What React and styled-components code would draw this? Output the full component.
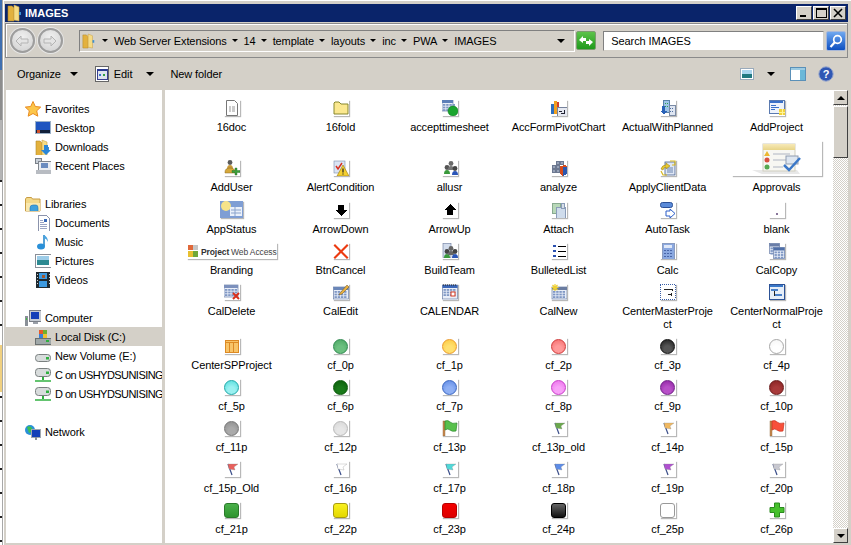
import { Fragment } from "react";
import styled, { createGlobalStyle } from "styled-components";

const GlobalStyle = createGlobalStyle`
  html, body {
    margin: 0;
    padding: 0;
    background: #d4d0c8;
  }
  * { box-sizing: border-box; }
`;

const Page = styled.div`
  display: flex;
  width: 851px;
  height: 545px;
  overflow: hidden;
  font-family: "Liberation Sans", Arial, sans-serif;
  font-size: 11px;
  letter-spacing: -0.1px;
  color: #000;
`;

const DesktopEdge = styled.div`
  width: 2px;
  flex: none;
  background:
    linear-gradient(#3f6fb0 0 70px, #8d8d8d 70px 120px, #b5b5b5 120px 180px, transparent 180px),
    linear-gradient(transparent 345px, #f0d080 345px 392px, transparent 392px),
    repeating-linear-gradient(#fff 0 12px, #222 12px 14px, #fff 14px 24px);
`;

const Window = styled.div`
  flex: 1;
  display: flex;
  flex-direction: column;
  min-width: 0;
  padding: 4px 3px 2px 2px;
  background: #d4d0c8;
  border-left: 1px solid #a8a8a8;
  box-shadow: inset 1px 1px 0 #fff;
`;

const TitleBar = styled.div`
  height: 18px;
  flex: none;
  display: flex;
  align-items: center;
  background: #0a246a;
  padding-left: 2px;
  padding-right: 2px;
`;

const TitleText = styled.span`
  margin-left: 2px;
  color: #fff;
  font-weight: 700;
  font-size: 11px;
  letter-spacing: 0;
  flex: 1;
`;

const WinButton = styled.div`
  width: 16px;
  height: 14px;
  margin-left: 1px;
  display: flex;
  align-items: center;
  justify-content: center;
  background: #d4d0c8;
  border: 1px solid;
  border-color: #fff #404040 #404040 #fff;
`;

const AddressBar = styled.div`
  margin-top: 1px;
  height: 35px;
  flex: none;
  display: flex;
  align-items: center;
  padding: 0 1px 0 4px;
  border: 1px solid #8a8a8a;
  box-shadow: inset 1px 1px 0 #fff;
`;

const RoundButton = styled.div`
  width: 25px;
  height: 25px;
  margin-right: 3px;
  border-radius: 50%;
  border: 2px solid #9d9d9d;
  background: radial-gradient(circle at 50% 35%, #f0f0f0, #cfcfcf);
  box-shadow: 0 0 0 1px #e6e6e6;
  display: flex;
  align-items: center;
  justify-content: center;
`;

const Breadcrumb = styled.div`
  width: 497px;
  height: 22px;
  margin-left: 13px;
  display: flex;
  align-items: center;
  padding-left: 2px;
  border: 1px solid;
  border-color: #808080 #fff #fff #808080;
  white-space: nowrap;
`;

const Crumb = styled.span`
  margin-right: 5px;
`;

const Caret = styled.span`
  flex: none;
  width: 0;
  height: 0;
  border-left: ${(p) => p.$size || 3}px solid transparent;
  border-right: ${(p) => p.$size || 3}px solid transparent;
  border-top: ${(p) => p.$size || 3}px solid #000;
  margin-right: ${(p) => p.$right ?? 6}px;
  margin-left: ${(p) => p.$left ?? 0}px;
`;

const Spring = styled.span`
  flex: 1;
`;

const GoButton = styled.div`
  width: 20px;
  height: 19px;
  margin-left: 1px;
  display: flex;
  align-items: center;
  justify-content: center;
  border: 1px solid #7c9c70;
  border-radius: 2px;
  background: linear-gradient(#5dc34a, #1f9a1c);
`;

const SearchBox = styled.div`
  width: 221px;
  height: 20px;
  margin-left: 7px;
  padding-left: 7px;
  display: flex;
  align-items: center;
  background: #fff;
  border: 1px solid;
  border-color: #808080 #d4d0c8 #d4d0c8 #808080;
`;

const SearchButton = styled.div`
  width: 20px;
  height: 20px;
  margin-left: 2px;
  display: flex;
  align-items: center;
  justify-content: center;
  border: 1px solid #a8b8d8;
  border-radius: 2px;
  background: linear-gradient(#6fa8f0, #0d4fc0);
`;

const Toolbar = styled.div`
  height: 32px;
  flex: none;
  display: flex;
  align-items: center;
  padding: 0 14px 0 12px;
`;

const ToolText = styled.span`
  margin-right: ${(p) => p.$right ?? 6}px;
`;

const ToolIcon = styled.span`
  display: flex;
  margin-left: ${(p) => p.$left ?? 0}px;
  margin-right: ${(p) => p.$right ?? 0}px;
`;

const Panes = styled.div`
  flex: 1;
  display: flex;
  min-height: 0;
`;

const NavPane = styled.div`
  width: 156px;
  flex: none;
  margin-left: 1px;
  padding-top: 9px;
  background: #fff;
  overflow: hidden;
`;

const NavGroup = styled.div`
  margin-bottom: 19px;
`;

const NavRow = styled.div`
  height: 19px;
  display: flex;
  align-items: center;
  gap: 4px;
  white-space: nowrap;
  padding-left: ${(p) => (p.$child ? 29 : 19)}px;
  background: ${(p) => (p.$selected ? "#d4d0c8" : "transparent")};
  letter-spacing: ${(p) => (p.$squeeze ? "-0.55px" : "inherit")};
  svg { flex: none; }
`;

const Splitter = styled.div`
  width: 3px;
  flex: none;
`;

const Content = styled.div`
  flex: 1;
  min-width: 0;
  padding: 10px 2px 0 12px;
  background: #fff;
  overflow: hidden;
`;

const IconGrid = styled.div`
  display: grid;
  grid-template-columns: repeat(6, 109px);
  grid-auto-rows: auto;
`;

const Cell = styled.div`
  grid-row: span 2;
  display: grid;
  grid-template-rows: subgrid;
  justify-items: center;
`;

const Thumb = styled.div`
  align-self: end;
  width: ${(p) => p.$w || 16}px;
  height: ${(p) => p.$h || 16}px;
  margin-bottom: 1px;
  display: flex;
  align-items: center;
  justify-content: center;
  background: #fff;
  box-shadow: 1px 1px 1px rgba(0, 0, 0, 0.28);
`;

const Label = styled.div`
  padding: 4px 0 7px;
  line-height: 13px;
  text-align: center;
  white-space: pre;
`;

const Dot = styled.span`
  width: 15px;
  height: 15px;
  border-radius: 50%;
  border: 1px solid ${(p) => p.$edge};
  background: radial-gradient(circle at 50% 70%, ${(p) => p.$fill} 30%, ${(p) => p.$dark} 100%);
`;

const Block = styled.span`
  width: 15px;
  height: 15px;
  border-radius: 3px;
  border: 1px solid ${(p) => p.$edge};
  background: linear-gradient(${(p) => p.$fill}, ${(p) => p.$dark});
`;

const Scrollbar = styled.div`
  width: 15px;
  flex: none;
  display: flex;
  flex-direction: column;
  background: repeating-conic-gradient(#d4d0c8 0 25%, #fff 0 50%) 0 0 / 2px 2px;
`;

const ScrollButton = styled.div`
  height: 15px;
  flex: none;
  display: flex;
  align-items: center;
  justify-content: center;
  background: #d4d0c8;
  border: 1px solid;
  border-color: #fff #404040 #404040 #fff;
`;

const ScrollThumb = styled.div`
  height: 52px;
  margin-top: 1px;
  flex: none;
  background: #d4d0c8;
  border: 1px solid;
  border-color: #fff #404040 #404040 #fff;
`;

const ScrollTrack = styled.div`
  flex: 1;
`;

const UpCaret = styled.span`
  width: 0;
  height: 0;
  border-left: 4px solid transparent;
  border-right: 4px solid transparent;
  border-bottom: 4px solid #000;
`;

const DownCaret = styled.span`
  width: 0;
  height: 0;
  border-left: 4px solid transparent;
  border-right: 4px solid transparent;
  border-top: 4px solid #000;
`;

const Ico = ({ w = 16, h = 16, children }) => (
  <svg width={w} height={h} viewBox={`0 0 ${w} ${h}`} shapeRendering="crispEdges">
    {children}
  </svg>
);

const Smooth = ({ w = 16, h = 16, children }) => (
  <svg width={w} height={h} viewBox={`0 0 ${w} ${h}`}>
    {children}
  </svg>
);

const Folder = ({ w = 16, h = 18 }) => (
  <svg width={w} height={h} viewBox="0 0 16 18">
    <path d="M1 2h4l2 2v13H1z" fill="#e3b13d" stroke="#b48a2a" strokeWidth=".6" />
    <path d="M7 1l5 2v14l-5-1z" fill="#f6dc84" stroke="#c9a24a" strokeWidth=".6" />
    <rect x="12" y="8" width="2" height="3" fill="#3c8fd0" />
  </svg>
);

const CalendarGrid = ({ x = 1, y = 2, w = 14, h = 12, head = "#5d7fb8" }) => {
  const cells = [];
  for (let r = 0; r < 3; r++) {
    for (let c = 0; c < 4; c++) {
      cells.push(<rect key={`${r}-${c}`} x={x + 1 + c * 3.2} y={y + 4 + r * 2.6} width="2.4" height="1.8" fill="#7f97c4" />);
    }
  }
  return (
    <>
      <rect x={x} y={y} width={w} height={h} fill="#e9eef8" stroke="#6a7fa8" strokeWidth=".7" />
      <rect x={x} y={y} width={w} height="3" fill={head} />
      {cells}
    </>
  );
};

const MiniUser = ({ x, y, c = "#6d6d6d", b = "#c89a3a" }) => (
  <>
    <circle cx={x + 3} cy={y + 2.5} r="2.4" fill={c} />
    <path d={`M${x} ${y + 9}q0-4 3-4t3 4z`} fill={b} />
  </>
);

const FlagSmall = ({ c }) => (
  <Smooth>
    <path d="M8 14L4 3" stroke="#3c4f8a" strokeWidth="1.2" />
    <path d="M4 3l10 0-4 3 1 3-6-1z" fill={c} stroke="#888" strokeWidth=".3" />
  </Smooth>
);

const FlagBig = ({ c, d }) => (
  <Smooth>
    <rect x="1" y="1" width="2" height="15" fill="#c98a50" stroke="#8a6030" strokeWidth=".4" />
    <path d="M3 1q3-1.200 5 1t7 1l-1 8q-4 1-6-1t-5 0z" fill={c} stroke={d} strokeWidth=".7" />
  </Smooth>
);

const icons = {
  doc: (
    <Smooth>
      <path d="M2.500.5h8l3 3v12h-11z" fill="#fff" stroke="#777" />
      <path d="M5 7h2M8 7h3M5 9h2M8 9h3M5 11h2M8 11h3" stroke="#999" />
    </Smooth>
  ),
  fold: (
    <Smooth>
      <path d="M1 14V3l1-1h4l2 2h7v10z" fill="#fbe88f" stroke="#87862c" />
    </Smooth>
  ),
  accept: (
    <Smooth>
      <CalendarGrid x={0} y={0} w={11} h={11} />
      <circle cx="11" cy="11" r="5" fill="#1aa52e" stroke="#0c7a1c" strokeWidth=".6" />
    </Smooth>
  ),
  pivot: (
    <Ico>
      <rect x="0" y="4" width="3" height="10" fill="#2d6fc0" />
      <rect x="3" y="1" width="3" height="13" fill="#f0a020" />
      <rect x="6" y="2" width="2" height="5" fill="#d04030" />
      <rect x="6" y="7" width="10" height="9" fill="#e6e9f2" stroke="#77839c" />
      <path d="M10 13h3v-3M8 11h3" stroke="#223" fill="none" />
    </Ico>
  ),
  actual: (
    <Ico>
      <rect x="3" y="0" width="6" height="12" fill="#9ec4e8" stroke="#5a83ab" />
      <path d="M5 3h1M7 3h1M5 6h1M7 6h1" stroke="#30a050" />
      <rect x="9" y="5" width="6" height="10" fill="#dfe6f2" stroke="#7a8aa5" />
      <path d="M10 8h1M12 8h1M10 11h1M12 11h1" stroke="#5070a0" />
      <path d="M2 6h3v5h2l-3 4-3-4h1z" fill="#2a62b8" />
    </Ico>
  ),
  addproject: (
    <Ico>
      <rect x="0" y="0" width="15" height="13" fill="#eef3fb" stroke="#5a7ab0" />
      <rect x="1" y="1" width="13" height="2" fill="#3a70c8" />
      <path d="M2 5h5M2 7h8M2 9h4" stroke="#3a70c8" />
      <rect x="10" y="9" width="6" height="6" fill="#f2d23c" />
      <path d="M13 9v6M10 12h6" stroke="#fff59a" />
    </Ico>
  ),
  adduser: (
    <Smooth>
      <MiniUser x={3} y={0} c="#5c5c5c" />
      <path d="M1 12q0-4 5-4t5 4v1H1z" fill="#d6a83a" stroke="#8a6820" strokeWidth=".5" />
      <path d="M11 8h2v2.500h3v2h-3V15h-2v-2.500H8v-2h3z" fill="#3ea03c" stroke="#1f6a1f" strokeWidth=".4" />
    </Smooth>
  ),
  alert: (
    <Smooth>
      <rect x="1" y="1" width="11" height="12" fill="#dbe4f4" stroke="#7b8cac" strokeWidth=".6" />
      <path d="M3 6l2 3 4-6" stroke="#d83020" strokeWidth="1.500" fill="none" />
      <path d="M10 5l6 11H4z" fill="#f4cf30" stroke="#9a7a10" strokeWidth=".6" />
      <path d="M10 8.500v4M10 13.500v1" stroke="#222" strokeWidth="1.200" />
    </Smooth>
  ),
  allusr: (
    <Smooth>
      <MiniUser x={2} y={5} c="#555" b="#3a9a3c" />
      <MiniUser x={6} y={1} c="#6a6a6a" b="#777" />
      <MiniUser x={10} y={6} c="#444" b="#2a55b8" />
    </Smooth>
  ),
  analyze: (
    <Ico>
      <path d="M1 5h3v3H1zM5 1h3v3H5zM5 5h3v3H5zM1 9h3v3H1zM5 9h3v3H5zM9 1h3v3H9z" fill="#98a3b8" stroke="#6c7890" />
      <path d="M9 6l5-1 2 2v7l-4 2-3-2z" fill="#d64c1c" />
      <path d="M12 7l4 0v7l-4 2z" fill="#2a58b0" />
    </Ico>
  ),
  apply: (
    <Smooth>
      <rect x="5" y="2" width="10" height="13" fill="#dfe7f5" stroke="#46608e" strokeWidth=".8" />
      <path d="M7 8h6M7 10h6M7 12h6" stroke="#6a84b0" />
      <path d="M1 9q1-4 5-4V3l4 3-4 3V7q-2 0-3 3z" fill="#e8c830" stroke="#90790e" strokeWidth=".5" />
      <path d="M10 1h5v4h-3" fill="none" stroke="#d8b820" strokeWidth="1.200" />
      <path d="M1 11l2 4h4" fill="none" stroke="#d8b820" strokeWidth="1.200" />
    </Smooth>
  ),
  approvals: (
    <svg width="90" height="35" viewBox="0 0 90 35">
      <defs>
        <linearGradient id="apprTop" x1="0" y1="0" x2="0" y2="1">
          <stop offset="0" stopColor="#f7e9b8" />
          <stop offset="1" stopColor="#e8d488" />
        </linearGradient>
      </defs>
      <path d="M20 29h45l3 4H30z" fill="#e8e8e8" />
      <rect x="31" y="3" width="32" height="27" fill="#f7f7f2" stroke="#cfcdbf" />
      <rect x="31" y="3" width="32" height="6" fill="url(#apprTop)" />
      <path d="M35 10l3 5h-6z" fill="#ecb830" />
      <circle cx="35" cy="19" r="2.500" fill="#d85040" />
      <circle cx="35" cy="26" r="2.500" fill="#56a850" />
      <path d="M41 13h17M41 19h13M41 26h10" stroke="#c8ccd2" strokeWidth="1.500" />
      <rect x="54" y="15" width="12" height="8" fill="#dde6f0" stroke="#8f9caf" />
      <path d="M52 24l5 5 11-12" stroke="#3b78c8" strokeWidth="2.500" fill="none" />
    </svg>
  ),
  status: (
    <svg width="23" height="17" viewBox="0 0 23 17">
      <rect width="23" height="17" fill="#7f9ed4" />
      <circle cx="6" cy="5" r="5" fill="#f6e38a" />
      <rect x="10" y="6" width="12" height="9" fill="#eaf0fa" />
      <path d="M11 9h10M11 12h10M15 6v9" stroke="#8aa3cc" />
    </svg>
  ),
  down: (
    <Ico>
      <path d="M5 3h6v5h3l-6 6-6-6h3z" fill="#000" />
    </Ico>
  ),
  up: (
    <Ico>
      <path d="M8 2l6 6h-3v5H5V8H2z" fill="#000" />
    </Ico>
  ),
  attach: (
    <Ico>
      <rect x="1" y="1" width="8" height="10" fill="#b8d8b8" stroke="#88aa90" />
      <rect x="5" y="5" width="9" height="11" fill="#cfdcec" stroke="#8a9cb8" />
      <rect x="10" y="1" width="3" height="5" fill="#d6dee8" stroke="#8a9cb8" />
    </Ico>
  ),
  autotask: (
    <Smooth>
      <rect x="0.500" y="0.500" width="12" height="5" rx="2" fill="#5a8ad8" stroke="#2a4f96" />
      <path d="M6 9h4V7l5 4.500L10 16v-2H6z" fill="#fff" stroke="#2a5cc8" />
    </Smooth>
  ),
  blank: (
    <Ico>
      <rect x="7" y="11" width="2" height="2" fill="#88759a" />
    </Ico>
  ),
  branding: (
    <svg width="90" height="16" viewBox="0 0 90 16">
      <rect x="1" y="2" width="5" height="5" fill="#e0683a" />
      <rect x="6" y="2" width="5" height="5" fill="#c6c6c6" />
      <rect x="1" y="8" width="5" height="6" fill="#e8c030" />
      <rect x="6" y="8" width="5" height="6" fill="#70a838" />
      <text x="14" y="12" fontFamily="Liberation Sans, sans-serif" fontSize="8.500" fontWeight="700" fill="#333">Project</text>
      <text x="44" y="12" fontFamily="Liberation Sans, sans-serif" fontSize="8.500" fill="#444">Web Access</text>
    </svg>
  ),
  cancel: (
    <Smooth>
      <path d="M2 1l6 6 6-6 1.500 1.500L9.500 8.500l6 6-1.500 1.500-6-6-6 6-1.500-1.500 6-6-6-6z" fill="#ec3a10" />
    </Smooth>
  ),
  team: (
    <Smooth>
      <rect x="1" y="0.500" width="8" height="14" fill="#d2dcec" stroke="#7a88a8" strokeWidth=".7" />
      <MiniUser x={2} y={6} c="#444" b="#3a9a3c" />
      <MiniUser x={6} y={3} c="#666" b="#666" />
      <MiniUser x={10} y={6} c="#444" b="#2a55b8" />
    </Smooth>
  ),
  bullets: (
    <Ico>
      <path d="M2 2h3v2H2zM2 7h3v2H2zM2 12h3v2H2z" fill="#2a50b0" />
      <path d="M7 3h8M7 8h8M7 13h8" stroke="#000" />
    </Ico>
  ),
  calc: (
    <Ico>
      <rect x="2" y="0" width="12" height="16" fill="#8aa8e0" stroke="#8a9cc0" />
      <rect x="4" y="2" width="8" height="3" fill="#dfe8f8" />
      <path d="M4 7h2M7 7h2M10 7h2M4 10h2M7 10h2M10 10h2M4 13h2M7 13h2M10 13h2" stroke="#4a66a8" />
    </Ico>
  ),
  calcopy: (
    <Smooth>
      <CalendarGrid x={0.500} y={0.500} w={10} h={10} head="#6a7ea8" />
      <CalendarGrid x={4.500} y={4.500} w={11} h={11} head="#4f6fa8" />
    </Smooth>
  ),
  caldelete: (
    <Smooth>
      <CalendarGrid x={0} y={1} w={14} h={12} head="#7c90bc" />
      <path d="M9 9l6 6M15 9l-6 6" stroke="#d8301c" strokeWidth="2" />
    </Smooth>
  ),
  caledit: (
    <Smooth>
      <CalendarGrid x={0.500} y={3} w={15} h={12} head="#6a86b8" />
      <path d="M7 9l7-8 2 2-7 7-3 1z" fill="#e8b040" stroke="#6a5020" strokeWidth=".5" />
    </Smooth>
  ),
  calendar: (
    <Smooth>
      <CalendarGrid x={0.500} y={1} w={15} h={14} head="#3a66b8" />
      <path d="M1 1h14" stroke="#222" strokeDasharray="1 1" />
      <rect x="9" y="8" width="4" height="4" fill="#fff" stroke="#d83a20" />
    </Smooth>
  ),
  calnew: (
    <Smooth>
      <CalendarGrid x={1} y={3} w={15} h={12} head="#6a7ca0" />
      <path d="M4 0v7M0.500 3.500h7M1.500 1l5 5M6.500 1l-5 5" stroke="#f0d030" strokeWidth="1.200" />
    </Smooth>
  ),
  master: (
    <Ico>
      <rect x="0" y="0" width="15" height="15" fill="#fff" stroke="#3a5fa8" strokeDasharray="1 1" />
      <path d="M4 5h8v2M8 10h3" stroke="#222" fill="none" />
      <path d="M11 9v3" stroke="#222" />
    </Ico>
  ),
  normal: (
    <Ico>
      <rect x="0" y="0" width="15" height="15" fill="#e6eef8" stroke="#2c5296" />
      <rect x="1" y="1" width="13" height="2" fill="#3a78c8" />
      <rect x="2" y="5" width="7" height="2" fill="#4a80c8" />
      <rect x="6" y="10" width="7" height="2" fill="#4a80c8" />
      <path d="M5 7v4h1" stroke="#222" fill="none" />
    </Ico>
  ),
  centersp: (
    <Ico>
      <rect x="1" y="2" width="13" height="12" fill="#f8c468" stroke="#dd8a24" />
      <path d="M1 4h13M5 4v10M9 4v10" stroke="#dd8a24" fill="none" />
    </Ico>
  ),
  plus: (
    <Smooth>
      <path d="M5.500 1h5v4.500H15v5h-4.500V15h-5v-4.500H1v-5h4.500z" fill="#46c02c" stroke="#2a8a1e" />
    </Smooth>
  ),
};

const dot = (fill, dark, edge) => <Dot $fill={fill} $dark={dark} $edge={edge} />;
const block = (fill, dark, edge) => <Block $fill={fill} $dark={dark} $edge={edge} />;

const items = [
  ["16doc", icons.doc],
  ["16fold", icons.fold],
  ["accepttimesheet", icons.accept],
  ["AccFormPivotChart", icons.pivot],
  ["ActualWithPlanned", icons.actual],
  ["AddProject", icons.addproject],
  ["AddUser", icons.adduser],
  ["AlertCondition", icons.alert],
  ["allusr", icons.allusr],
  ["analyze", icons.analyze],
  ["ApplyClientData", icons.apply],
  ["Approvals", icons.approvals, 90, 35],
  ["AppStatus", icons.status, 23, 17],
  ["ArrowDown", icons.down],
  ["ArrowUp", icons.up],
  ["Attach", icons.attach],
  ["AutoTask", icons.autotask],
  ["blank", icons.blank],
  ["Branding", icons.branding, 90, 16],
  ["BtnCancel", icons.cancel],
  ["BuildTeam", icons.team],
  ["BulletedList", icons.bullets],
  ["Calc", icons.calc],
  ["CalCopy", icons.calcopy],
  ["CalDelete", icons.caldelete],
  ["CalEdit", icons.caledit],
  ["CALENDAR", icons.calendar],
  ["CalNew", icons.calnew],
  ["CenterMasterProje\nct", icons.master],
  ["CenterNormalProje\nct", icons.normal],
  ["CenterSPProject", icons.centersp],
  ["cf_0p", dot("#6cc080", "#4aa562", "#2f8a50")],
  ["cf_1p", dot("#ffe070", "#fbc83e", "#eb9a2a")],
  ["cf_2p", dot("#ff9a9a", "#f46a6a", "#d03a3a")],
  ["cf_3p", dot("#555", "#1a1a1a", "#111")],
  ["cf_4p", dot("#fff", "#f4f4f4", "#a8a8a8")],
  ["cf_5p", dot("#9af0f0", "#50dcdc", "#20a8a8")],
  ["cf_6p", dot("#1a7a1a", "#0a5a0a", "#0a5a0a")],
  ["cf_7p", dot("#8fb0f4", "#5c88e4", "#3a66c0")],
  ["cf_8p", dot("#f8a0f8", "#ea6cea", "#c83cc8")],
  ["cf_9p", dot("#b850c8", "#8c20a0", "#702088")],
  ["cf_10p", dot("#a83a3a", "#842020", "#6a1a1a")],
  ["cf_11p", dot("#aaa", "#8c8c8c", "#777")],
  ["cf_12p", dot("#e6e6e6", "#d6d6d6", "#b8b8b8")],
  ["cf_13p", <FlagBig c="#58c04c" d="#2a8a2a" />],
  ["cf_13p_old", <FlagSmall c="#6aa84c" />],
  ["cf_14p", <FlagSmall c="#f0b860" />],
  ["cf_15p", <FlagBig c="#f8503a" d="#c8301c" />],
  ["cf_15p_Old", <FlagSmall c="#e8605c" />],
  ["cf_16p", <FlagSmall c="#ffffff" />],
  ["cf_17p", <FlagSmall c="#50d8d8" />],
  ["cf_18p", <FlagSmall c="#5c8ce8" />],
  ["cf_19p", <FlagSmall c="#b050d0" />],
  ["cf_20p", <FlagSmall c="#c8c8d0" />],
  ["cf_21p", block("#4ab04a", "#2e942e", "#2a7a2a")],
  ["cf_22p", block("#f8f020", "#e4d800", "#a89c10")],
  ["cf_23p", block("#f40000", "#dc0000", "#b80000")],
  ["cf_24p", block("#666", "#111", "#000")],
  ["cf_25p", block("#fff", "#fff", "#999")],
  ["cf_26p", icons.plus],
];

const navIcons = {
  star: (
    <Smooth>
      <path d="M8 .5l2.300 5 5.400.6-4 3.700 1.100 5.400L8 12.500 3.200 15.200l1.100-5.400-4-3.700 5.400-.6z" fill="#fcc64a" stroke="#e88a20" />
    </Smooth>
  ),
  desktop: (
    <Ico>
      <rect x="0" y="1" width="16" height="13" fill="#9ab0c8" />
      <rect x="1" y="2" width="14" height="11" fill="#1f55c0" />
      <rect x="1" y="10" width="14" height="3" fill="#10203a" />
      <rect x="2" y="10" width="3" height="3" fill="#d0502a" />
    </Ico>
  ),
  downloads: (
    <Smooth>
      <Folder />
      <path d="M9 6h4v5h3l-5 5-5-5h3z" fill="#2a86d8" />
    </Smooth>
  ),
  recent: (
    <Ico>
      <rect x="0" y="0" width="6" height="5" fill="#c8cfd8" stroke="#7a8088" />
      <rect x="3" y="3" width="13" height="9" fill="#e8ecf2" stroke="#80868e" />
      <rect x="6" y="5" width="7" height="5" fill="#6a8cc0" />
      <rect x="1" y="12" width="15" height="4" fill="#b8bcc2" />
    </Ico>
  ),
  libraries: (
    <Smooth>
      <path d="M0.500 15V3l1-1.500h5l1 1.500H15v12z" fill="#f3d98a" stroke="#c89c44" />
      <path d="M1 7h14v8H1z" fill="#f9e8ae" />
      <path d="M5 15v-3q0-3 3-3h3q2 0 2 3v3" fill="#3ea0dc" stroke="#1c76b8" strokeWidth=".6" />
    </Smooth>
  ),
  documents: (
    <Ico>
      <path d="M3 0h8l3 3v13H3z" fill="#fff" stroke="#8b93ac" />
      <path d="M5 5h3M5 7h4M5 9h7M5 11h7M5 13h7" stroke="#9aa4c4" />
      <rect x="9" y="4" width="3" height="3" fill="#3a6ab8" />
    </Ico>
  ),
  music: (
    <Smooth>
      <path d="M9 1v11" stroke="#1c82c8" strokeWidth="1.500" />
      <ellipse cx="6" cy="12.500" rx="4" ry="3" fill="#2a90d8" />
      <path d="M9 1q4 2 4 7-1-3-4-4z" fill="#4aa4e0" />
    </Smooth>
  ),
  pictures: (
    <Ico>
      <rect x="0" y="1" width="16" height="13" fill="#fff" stroke="#8a8f98" />
      <rect x="2" y="3" width="12" height="9" fill="#9ccce8" />
      <rect x="2" y="7" width="12" height="5" fill="#2d8a92" />
    </Ico>
  ),
  videos: (
    <Ico>
      <rect x="1" y="0" width="14" height="16" fill="#1f2a30" />
      <rect x="4" y="1" width="8" height="6" fill="#3c9ae0" />
      <rect x="4" y="9" width="8" height="6" fill="#3c9ae0" />
      <rect x="7" y="3" width="3" height="3" fill="#a05a30" />
      <path d="M2 2v12M14 2v12" stroke="#d0d0d0" strokeDasharray="1 2" />
    </Ico>
  ),
  computer: (
    <Ico>
      <rect x="0" y="6" width="3" height="10" fill="#8a9098" />
      <rect x="1" y="8" width="1" height="2" fill="#40c040" />
      <rect x="4" y="0" width="12" height="11" fill="#c6ccd4" stroke="#7a8088" />
      <rect x="6" y="2" width="8" height="7" fill="#1440b8" />
      <rect x="8" y="12" width="5" height="2" fill="#9aa0a8" />
    </Ico>
  ),
  localdisk: (
    <Ico>
      <rect x="0" y="9" width="16" height="6" fill="#a0a8a8" stroke="#6a7070" />
      <rect x="11" y="11" width="3" height="2" fill="#30b040" />
      <rect x="4" y="1" width="4" height="4" fill="#e85a2a" />
      <rect x="8" y="1" width="4" height="4" fill="#70b030" />
      <rect x="4" y="5" width="4" height="4" fill="#3a80d8" />
      <rect x="8" y="5" width="4" height="4" fill="#f0c030" />
    </Ico>
  ),
  disk: (
    <Smooth>
      <rect x="0.500" y="6.500" width="15" height="7" rx="3" fill="#d8dcdc" stroke="#7a8080" />
      <rect x="11" y="9" width="3" height="2.500" fill="#30b040" />
    </Smooth>
  ),
  netdisk: (
    <Smooth>
      <rect x="0.500" y="1.500" width="15" height="8" rx="3" fill="#d8dcdc" stroke="#7a8080" />
      <rect x="11" y="4.500" width="3" height="2.500" fill="#30b040" />
      <path d="M8 10v3" stroke="#30b040" strokeWidth="2" />
      <path d="M0 14h16" stroke="#30b040" strokeWidth="1.500" />
    </Smooth>
  ),
  network: (
    <Smooth>
      <circle cx="5" cy="6" r="5" fill="#2a90d8" />
      <path d="M2 3q3-2 5 1t-3 5z" fill="#3cc050" />
      <rect x="6.500" y="5.500" width="9" height="8" fill="#1440b8" stroke="#a0a8b0" />
      <rect x="10" y="13" width="2" height="3" fill="#8a9098" />
    </Smooth>
  ),
};

const navGroups = [
  [
    ["Favorites", navIcons.star],
    ["Desktop", navIcons.desktop],
    ["Downloads", navIcons.downloads],
    ["Recent Places", navIcons.recent],
  ],
  [
    ["Libraries", navIcons.libraries],
    ["Documents", navIcons.documents],
    ["Music", navIcons.music],
    ["Pictures", navIcons.pictures],
    ["Videos", navIcons.videos],
  ],
  [
    ["Computer", navIcons.computer],
    ["Local Disk (C:)", navIcons.localdisk, true],
    ["New Volume (E:)", navIcons.disk],
    ["C on USHYDSUNISING", navIcons.netdisk, false, true],
    ["D on USHYDSUNISING", navIcons.netdisk, false, true],
  ],
  [["Network", navIcons.network]],
];

const crumbs = ["Web Server Extensions", "14", "template", "layouts", "inc", "PWA"];

const App = () => (
  <Page>
    <GlobalStyle />
    <DesktopEdge />
    <Window>
      <TitleBar>
        <Folder w={16} h={18} />
        <TitleText>IMAGES</TitleText>
        <WinButton>
          <Ico w={10} h={10}>
            <rect x="1" y="7" width="6" height="2" fill="#000" />
          </Ico>
        </WinButton>
        <WinButton>
          <Ico w={11} h={10}>
            <rect x="0.500" y="0.500" width="10" height="9" fill="none" stroke="#000" />
            <rect x="0" y="0" width="11" height="2" fill="#000" />
          </Ico>
        </WinButton>
        <WinButton>
          <Smooth w={10} h={10}>
            <path d="M1 1l8 8M9 1l-8 8" stroke="#000" strokeWidth="1.600" />
          </Smooth>
        </WinButton>
      </TitleBar>

      <AddressBar>
        <RoundButton>
          <Smooth w={14} h={12}>
            <path d="M1 6l5-5v3h7v4H6v3z" fill="#e4e4e4" stroke="#b4b4b4" />
          </Smooth>
        </RoundButton>
        <RoundButton>
          <Smooth w={14} h={12}>
            <path d="M13 6L8 1v3H1v4h7v3z" fill="#e4e4e4" stroke="#b4b4b4" />
          </Smooth>
        </RoundButton>
        <Breadcrumb>
          <Folder w={14} h={16} />
          <Caret $left={6} />
          {crumbs.map((name) => (
            <Fragment key={name}>
              <Crumb>{name}</Crumb>
              <Caret />
            </Fragment>
          ))}
          <Crumb>IMAGES</Crumb>
          <Spring />
          <Caret $size={4} $right={9} />
        </Breadcrumb>
        <GoButton>
          <Smooth w={16} h={14}>
            <path d="M1 6l4-4v2h3v3H5v2zM15 8l-4 4v-2H8V7h3V5z" fill="#fff" />
          </Smooth>
        </GoButton>
        <SearchBox>Search IMAGES</SearchBox>
        <SearchButton>
          <Smooth w={14} h={14}>
            <circle cx="8.500" cy="5.500" r="3.800" fill="none" stroke="#fff" strokeWidth="1.700" />
            <path d="M6 8l-4.500 5" stroke="#fff" strokeWidth="2.200" />
          </Smooth>
        </SearchButton>
      </AddressBar>

      <Toolbar>
        <ToolText $right={9}>Organize</ToolText>
        <Caret $size={4} $right={17} />
        <ToolIcon $right={5}>
          <Ico w={14} h={16}>
            <rect x="0.500" y="0.500" width="13" height="15" fill="#fff" stroke="#666" />
            <rect x="2" y="3" width="10" height="10" fill="#dfe4ee" stroke="#3a3f90" />
            <rect x="2" y="3" width="10" height="2" fill="#2a3a90" />
            <rect x="4" y="8" width="2" height="2" fill="#3a70d0" />
            <rect x="8" y="8" width="2" height="2" fill="#30a040" />
          </Ico>
        </ToolIcon>
        <ToolText $right={14}>Edit</ToolText>
        <Caret $size={4} $right={16} />
        <ToolText>New folder</ToolText>
        <Spring />
        <ToolIcon $right={13}>
          <Ico w={14} h={12}>
            <rect x="0.500" y="0.500" width="13" height="11" fill="#fff" stroke="#9ab" />
            <rect x="2" y="2" width="10" height="4" fill="#a8d4ee" />
            <rect x="2" y="6" width="10" height="4" fill="#207880" />
          </Ico>
        </ToolIcon>
        <Caret $size={4} $right={15} />
        <ToolIcon $right={12}>
          <Ico w={16} h={14}>
            <rect x="0.500" y="0.500" width="15" height="13" fill="#fff" stroke="#5a90b8" />
            <rect x="10" y="1" width="5" height="12" fill="#6ab8d8" />
            <rect x="1" y="1" width="14" height="2" fill="#9ccbe2" />
          </Ico>
        </ToolIcon>
        <ToolIcon>
          <svg width="16" height="16" viewBox="0 0 16 16">
            <circle cx="8" cy="8" r="7.200" fill="#2f57b4" stroke="#9aa8cc" />
            <text x="8" y="12" textAnchor="middle" fontFamily="Liberation Sans, sans-serif" fontWeight="700" fontSize="11" fill="#fff">?</text>
          </svg>
        </ToolIcon>
      </Toolbar>

      <Panes>
        <NavPane>
          {navGroups.map((group) => (
            <NavGroup key={group[0][0]}>
              {group.map(([name, icon, selected, squeeze], i) => (
                <NavRow key={name} $child={i > 0} $selected={selected} $squeeze={squeeze}>
                  {icon}
                  <span>{name}</span>
                </NavRow>
              ))}
            </NavGroup>
          ))}
        </NavPane>
        <Splitter />
        <Content>
          <IconGrid>
            {items.map(([name, icon, w, h]) => (
              <Cell key={name}>
                <Thumb $w={w} $h={h}>{icon}</Thumb>
                <Label>{name}</Label>
              </Cell>
            ))}
          </IconGrid>
        </Content>
        <Scrollbar>
          <ScrollButton>
            <UpCaret />
          </ScrollButton>
          <ScrollThumb />
          <ScrollTrack />
          <ScrollButton>
            <DownCaret />
          </ScrollButton>
        </Scrollbar>
      </Panes>
    </Window>
  </Page>
);

export default App;
